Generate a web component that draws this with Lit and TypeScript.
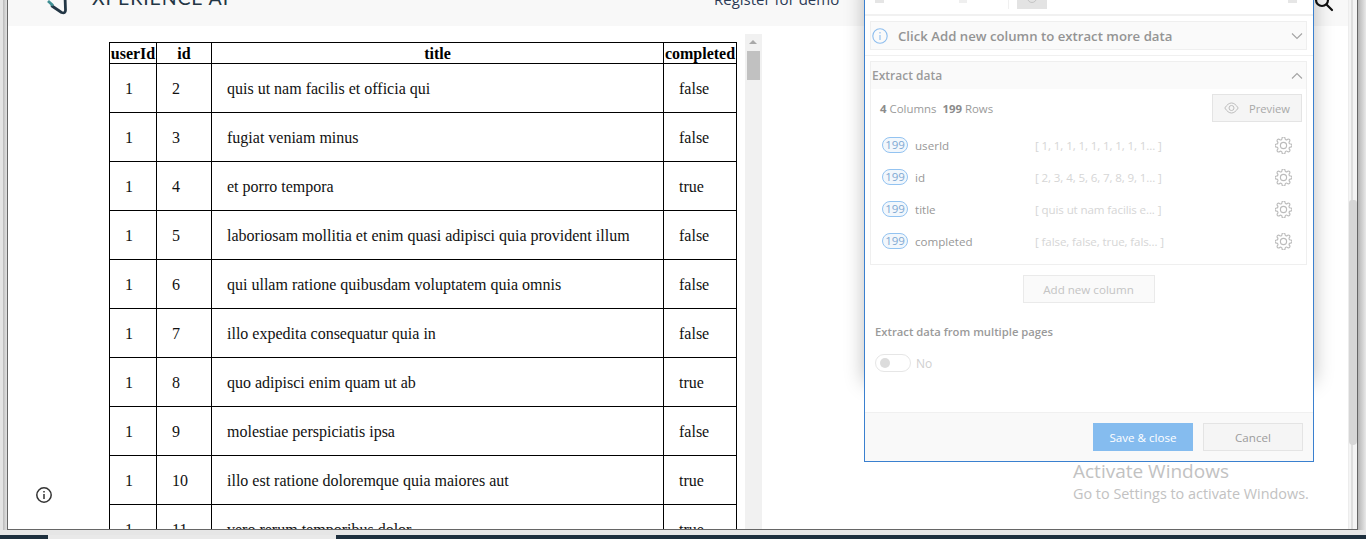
import { LitElement, html, css, svg } from 'lit';
import { customElement } from 'lit/decorators.js';

const rows = [
  [1, 2, 'quis ut nam facilis et officia qui', 'false'],
  [1, 3, 'fugiat veniam minus', 'false'],
  [1, 4, 'et porro tempora', 'true'],
  [1, 5, 'laboriosam mollitia et enim quasi adipisci quia provident illum', 'false'],
  [1, 6, 'qui ullam ratione quibusdam voluptatem quia omnis', 'false'],
  [1, 7, 'illo expedita consequatur quia in', 'false'],
  [1, 8, 'quo adipisci enim quam ut ab', 'true'],
  [1, 9, 'molestiae perspiciatis ipsa', 'false'],
  [1, 10, 'illo est ratione doloremque quia maiores aut', 'true'],
  [1, 11, 'vero rerum temporibus dolor', 'true'],
];

const columns = [
  ['userId', '[ 1, 1, 1, 1, 1, 1, 1, 1, 1... ]'],
  ['id', '[ 2, 3, 4, 5, 6, 7, 8, 9, 1... ]'],
  ['title', '[ quis ut nam facilis e... ]'],
  ['completed', '[ false, false, true, fals... ]'],
];

const gear = svg`<path d="M19.4 15a1.65 1.65 0 0 0 .33 1.82l.06.06a2 2 0 0 1 0 2.83 2 2 0 0 1-2.83 0l-.06-.06a1.65 1.65 0 0 0-1.82-.33 1.65 1.65 0 0 0-1 1.51V21a2 2 0 0 1-2 2 2 2 0 0 1-2-2v-.09A1.65 1.65 0 0 0 9 19.4a1.65 1.65 0 0 0-1.82.33l-.06.06a2 2 0 0 1-2.83 0 2 2 0 0 1 0-2.83l.06-.06a1.65 1.65 0 0 0 .33-1.82 1.65 1.65 0 0 0-1.51-1H3a2 2 0 0 1-2-2 2 2 0 0 1 2-2h.09A1.65 1.65 0 0 0 4.6 9a1.65 1.65 0 0 0-.33-1.82l-.06-.06a2 2 0 0 1 0-2.83 2 2 0 0 1 2.83 0l.06.06a1.65 1.65 0 0 0 1.82.33H9a1.65 1.65 0 0 0 1-1.51V3a2 2 0 0 1 2-2 2 2 0 0 1 2 2v.09a1.65 1.65 0 0 0 1 1.51 1.65 1.65 0 0 0 1.82-.33l.06-.06a2 2 0 0 1 2.83 0 2 2 0 0 1 0 2.83l-.06.06a1.65 1.65 0 0 0-.33 1.82V9a1.65 1.65 0 0 0 1.51 1H21a2 2 0 0 1 2 2 2 2 0 0 1-2 2h-.09a1.65 1.65 0 0 0-1.51 1z"/><circle cx="12" cy="12" r="4"/>`;

@customElement('app-root')
export class AppRoot extends LitElement {
  static styles = css`
    :host {
      display: block;
      position: relative;
      width: 1366px;
      height: 539px;
      overflow: hidden;
      background: #e6e6e6;
      font-family: 'Open Sans', sans-serif;
    }
    .desk {
      display: flex;
      height: 530px;
    }
    .edge-left {
      width: 7px;
      background: linear-gradient(90deg, #e4e4e4 0 3px, #b9b9b9 3px, #dcdcdc 6px);
    }
    .edge-right {
      flex: 1;
      background: linear-gradient(90deg, #b5b5b5, #e8e8e8);
    }
    .window {
      width: 1351px;
      box-sizing: border-box;
      display: flex;
      background: #fff;
      border-left: 1px solid #666;
      border-right: 1px solid #666;
      border-bottom: 1px solid #666;
    }
    .page {
      width: 1341px;
      overflow: hidden;
    }
    .header {
      height: 26px;
      background: #f8f8f8;
      position: relative;
      display: flex;
      overflow: hidden;
    }
    .logo {
      width: 24px;
      height: 16px;
      margin-left: 36px;
      flex: none;
    }
    .brand {
      margin: -13px 0 0 24px;
      height: 22px;
      font-family: 'Lato', sans-serif;
      font-size: 19.5px;
      line-height: 22px;
      letter-spacing: 0.85px;
      color: #233645;
      width: 622px;
      white-space: nowrap;
    }
    .register {
      margin-top: -11px;
      font-size: 15px;
      line-height: 20px;
      color: #2b3a55;
      white-space: nowrap;
    }
    .search {
      position: absolute;
      left: 1306px;
      top: -8px;
      width: 20px;
      height: 20px;
    }
    .content {
      display: flex;
      height: 503px;
      padding-left: 101px;
      overflow: hidden;
      position: relative;
    }
    .table-wrap {
      padding-top: 16px;
    }
    table {
      border-collapse: collapse;
      table-layout: fixed;
      width: 627px;
      font-family: 'Liberation Serif', serif;
      font-size: 16px;
      color: #111;
    }
    th, td {
      border: 1px solid #000;
    }
    th {
      height: 19px;
      padding: 1px 0 0;
      font-size: 16px;
      line-height: 18px;
      color: #000;
    }
    td {
      height: 47px;
      padding: 1px 15px 0;
      line-height: 18px;
      white-space: nowrap;
    }
    .inner-bar {
      width: 17px;
      margin: 8px 0 0 8px;
      background: #f1f1f1;
      position: relative;
    }
    .inner-bar i {
      display: block;
      margin: 17px 2px 0;
      height: 29px;
      background: #c1c1c1;
    }
    .inner-bar b {
      position: absolute;
      left: 4px;
      top: 6px;
      border: 4px solid transparent;
      border-top: 0;
      border-bottom: 4px solid #a8a8a8;
    }
    .info-float {
      position: absolute;
      left: 27px;
      top: 460px;
      width: 18px;
      height: 18px;
    }
    .activate {
      position: absolute;
      left: 1065px;
      top: 432px;
      color: #c2c2c2;
      white-space: nowrap;
    }
    .activate div:first-child {
      font-size: 19px;
      line-height: 26px;
    }
    .activate div:last-child {
      font-size: 14.4px;
      line-height: 20px;
    }
    .outer-bar {
      width: 8px;
      border-left: 1px solid #ececec;
      background: linear-gradient(90deg, #f4f4f4 0 2px, #dedede 2px 4px, #f4f4f4 4px);
      display: flex;
      flex-direction: column;
    }
    .outer-bar i {
      display: block;
      height: 245px;
      margin-top: 200px;
      background: #d6d6d6;
      border-radius: 3px 3px 4px 4px;
    }
    .taskbar {
      display: flex;
      margin-top: 5px;
      height: 4px;
      background: #1d2f3d;
    }
    .taskbar span {
      margin-left: 48px;
      width: 288px;
      background: #e9e9e9;
    }
    .halo {
      position: absolute;
      left: 864px;
      top: -20px;
      width: 450px;
      height: 403px;
      border-radius: 6px;
      background: #fff;
      box-shadow: 0 0 20px rgba(0, 0, 0, 0.26);
    }
    .dialog {
      position: absolute;
      left: 864px;
      top: 0;
      width: 450px;
      height: 462px;
      box-sizing: border-box;
      background: #fff;
      border: 1px solid #3a80cf;
      border-top: 0;
      display: flex;
      flex-direction: column;
      font-size: 11.6px;
      color: #8b8b8b;
    }
    .toolbar {
      height: 16px;
      box-sizing: border-box;
      flex: none;
      border-bottom: 2px solid #f1f1f1;
      overflow: hidden;
      display: flex;
    }
    .tb-mark {
      width: 9px;
      height: 3px;
      margin-left: 10px;
      background: #e5e5e5;
    }
    .tb-mark.small {
      width: 8px;
      margin-left: 75px;
      background: #efefef;
    }
    .tb-sep {
      width: 1px;
      height: 9px;
      margin-left: 41px;
      background: #f0f0f0;
    }
    .tb-btn {
      width: 30px;
      height: 9px;
      margin-left: 8px;
      background: #e3e3e3;
      display: flex;
      justify-content: center;
    }
    .tb-btn svg {
      width: 14px;
      height: 9px;
    }
    .tb-end {
      width: 9px;
      height: 3px;
      margin-left: 241px;
      background: #e6e6e6;
    }
    .notice {
      margin: 5px 6px 0 5px;
      height: 27px;
      flex: none;
      border: 1px solid #efefef;
      background: #fafafa;
      display: flex;
      align-items: center;
      padding: 0 3px 0 1px;
      font-size: 13.2px;
      font-weight: 600;
      color: #949494;
    }
    .notice svg:first-child {
      width: 16px;
      height: 16px;
      margin-right: 10px;
    }
    .chev {
      width: 12px;
      height: 8px;
      margin-left: auto;
    }
    .rule {
      height: 1px;
      flex: none;
      margin-top: 5px;
      background: #f0f0f0;
    }
    .extract {
      margin: 5px 6px 0 5px;
      height: 204px;
      border: 1px solid #efefef;
      box-sizing: border-box;
      flex: none;
    }
    .extract-head {
      height: 27px;
      background: #fafafa;
      display: flex;
      align-items: center;
      padding: 0 3px 0 1px;
      font-size: 12px;
      font-weight: 600;
      color: #9a9a9a;
    }
    .stats {
      display: flex;
      align-items: center;
      height: 38px;
      padding: 0 4px 0 9px;
      color: #9a9a9a;
      font-size: 11.4px;
    }
    .stats b {
      font-weight: 700;
      color: #8b8b8b;
      margin-right: 3px;
    }
    .stats span {
      margin-right: 6px;
    }
    .preview {
      margin-left: auto;
      width: 90px;
      height: 28px;
      box-sizing: border-box;
      border: 1px solid #e4e4e4;
      background: #f5f5f5;
      display: flex;
      align-items: center;
      padding-left: 11px;
      gap: 10px;
      font-size: 11.2px;
      color: #a8a8a8;
    }
    .preview svg {
      width: 15px;
      height: 12px;
    }
    .cols {
      display: flex;
      flex-direction: column;
      padding-top: 2px;
    }
    .col {
      height: 32px;
      display: flex;
      align-items: center;
      padding: 0 14px 0 11px;
    }
    .pill {
      width: 26px;
      height: 16px;
      box-sizing: border-box;
      border: 1px solid #93c3f1;
      border-radius: 8px;
      background: #f2f7fc;
      color: #7fa9d3;
      font-size: 11.5px;
      line-height: 13px;
      text-align: center;
      margin-right: 7px;
      flex: none;
    }
    .col-name {
      width: 120px;
      color: #979797;
    }
    .col-sample {
      color: #d6d6d6;
      white-space: nowrap;
      letter-spacing: -0.12px;
    }
    .col svg {
      width: 17px;
      height: 17px;
      margin-left: auto;
      fill: none;
      stroke: #bcbcbc;
      stroke-width: 1.5;
    }
    .add-wrap {
      display: flex;
      justify-content: center;
      margin-top: 10px;
      padding-right: 1px;
    }
    .add {
      width: 132px;
      height: 28px;
      box-sizing: border-box;
      border: 1px solid #eaeaea;
      background: #fafafa;
      color: #c4c4c4;
      display: flex;
      align-items: center;
      justify-content: center;
    }
    .multi {
      margin: 21px 0 0 10px;
      font-weight: 600;
      line-height: 16px;
      font-size: 11.25px;
      color: #9a9a9a;
    }
    .toggle-row {
      display: flex;
      align-items: center;
      margin: 14px 0 0 10px;
      color: #cfcfcf;
      font-size: 12px;
      gap: 5px;
    }
    .toggle {
      width: 36px;
      height: 18px;
      box-sizing: border-box;
      border: 1px solid #e6e6e6;
      border-radius: 9px;
      padding: 3px 4px;
    }
    .toggle i {
      display: block;
      width: 10px;
      height: 10px;
      border-radius: 50%;
      background: #dcdcdc;
    }
    .footer {
      margin-top: auto;
      height: 49px;
      flex: none;
      box-sizing: border-box;
      border-top: 1px solid #f0f0f0;
      background: #f9f9f9;
      display: flex;
      justify-content: flex-end;
      padding: 10px 10px 0 0;
      gap: 10px;
    }
    .footer div {
      width: 100px;
      height: 28px;
      box-sizing: border-box;
      display: flex;
      align-items: center;
      justify-content: center;
    }
    .save {
      background: #85bcef;
      color: #fff;
    }
    .cancel {
      background: #f5f5f5;
      border: 1px solid #e4e4e4;
      color: #9c9c9c;
    }
  `;

  render() {
    return html`
      <div class="desk">
        <div class="edge-left"></div>
        <div class="window">
          <div class="page">
            <div class="header">
              <svg class="logo" viewBox="0 0 24 16" fill="none">
                <path d="M21 -4 L21.500 10 Q21.500 14 17.500 12.500 L8 6" stroke="#233645" stroke-width="2.800" stroke-linecap="round"/>
                <path d="M4 1 L9 5.500" stroke="#3f8f94" stroke-width="2.800"/>
              </svg>
              <div class="brand">XPERIENCE AI</div>
              <div class="register">Register for demo</div>
              <svg class="search" viewBox="0 0 20 20" fill="none" stroke="#111" stroke-width="2.2">
                <circle cx="8" cy="8" r="6"/>
                <path d="M12.5 12.5 L18 18" stroke-linecap="round"/>
              </svg>
            </div>
            <div class="content">
              <div class="table-wrap">
                <table>
                  <colgroup>
                    <col style="width:47px" />
                    <col style="width:55px" />
                    <col style="width:452px" />
                    <col style="width:73px" />
                  </colgroup>
                  <thead>
                    <tr><th>userId</th><th>id</th><th>title</th><th>completed</th></tr>
                  </thead>
                  <tbody>
                    ${rows.map(
                      (r) => html`<tr><td>${r[0]}</td><td>${r[1]}</td><td>${r[2]}</td><td>${r[3]}</td></tr>`
                    )}
                  </tbody>
                </table>
              </div>
              <div class="inner-bar"><b></b><i></i></div>
              <svg class="info-float" viewBox="0 0 18 18" fill="none" stroke="#333" stroke-width="1.5">
                <circle cx="9" cy="9" r="7.2"/>
                <path d="M9 8v5M9 5v1.6"/>
              </svg>
              <div class="activate">
                <div>Activate Windows</div>
                <div>Go to Settings to activate Windows.</div>
              </div>
            </div>
          </div>
          <div class="outer-bar"><i></i></div>
        </div>
        <div class="edge-right"></div>
      </div>
      <div class="taskbar"><span></span></div>

      <div class="halo"></div>
      <div class="dialog">
        <div class="toolbar">
          <div class="tb-mark"></div>
          <div class="tb-mark small"></div>
          <div class="tb-sep"></div>
          <div class="tb-btn">
            <svg viewBox="0 0 14 9" fill="none" stroke="#c4c4c4" stroke-width="1"><circle cx="7" cy="-2" r="4.500"/></svg>
          </div>
          <div class="tb-end"></div>
        </div>
        <div class="notice">
          <svg viewBox="0 0 16 16" fill="none" stroke="#8dbdee" stroke-width="1.1">
            <circle cx="8" cy="8" r="7.2"/>
            <path d="M8 7v5M8 4v1.4"/>
          </svg>
          Click Add new column to extract more data
          <svg class="chev" viewBox="0 0 12 8" fill="none" stroke="#a4a4a4" stroke-width="1.1"><path d="M1 1.5l5 5 5-5"/></svg>
        </div>
        <div class="rule"></div>
        <div class="extract">
          <div class="extract-head">
            Extract data
            <svg class="chev" viewBox="0 0 12 8" fill="none" stroke="#a4a4a4" stroke-width="1.1"><path d="M1 6.5l5-5 5 5"/></svg>
          </div>
          <div class="stats">
            <b>4</b><span>Columns</span><b>199</b><span>Rows</span>
            <div class="preview">
              <svg viewBox="0 0 15 12" fill="none" stroke="#bdbdbd" stroke-width="1">
                <path d="M.8 6C3 2.6 5.2 1 7.5 1s4.500 1.6 6.700 5c-2.200 3.400-4.400 5-6.700 5S3 9.400.8 6z"/>
                <circle cx="7.500" cy="6" r="2.500"/>
              </svg>
              Preview
            </div>
          </div>
          <div class="cols">
            ${columns.map(
              (c) => html`<div class="col">
                <span class="pill">199</span>
                <span class="col-name">${c[0]}</span>
                <span class="col-sample">${c[1]}</span>
                <svg viewBox="1 1 22 22">${gear}</svg>
              </div>`
            )}
          </div>
        </div>
        <div class="add-wrap"><div class="add">Add new column</div></div>
        <div class="multi">Extract data from multiple pages</div>
        <div class="toggle-row"><div class="toggle"><i></i></div>No</div>
        <div class="footer">
          <div class="save">Save &amp; close</div>
          <div class="cancel">Cancel</div>
        </div>
      </div>
    `;
  }
}
